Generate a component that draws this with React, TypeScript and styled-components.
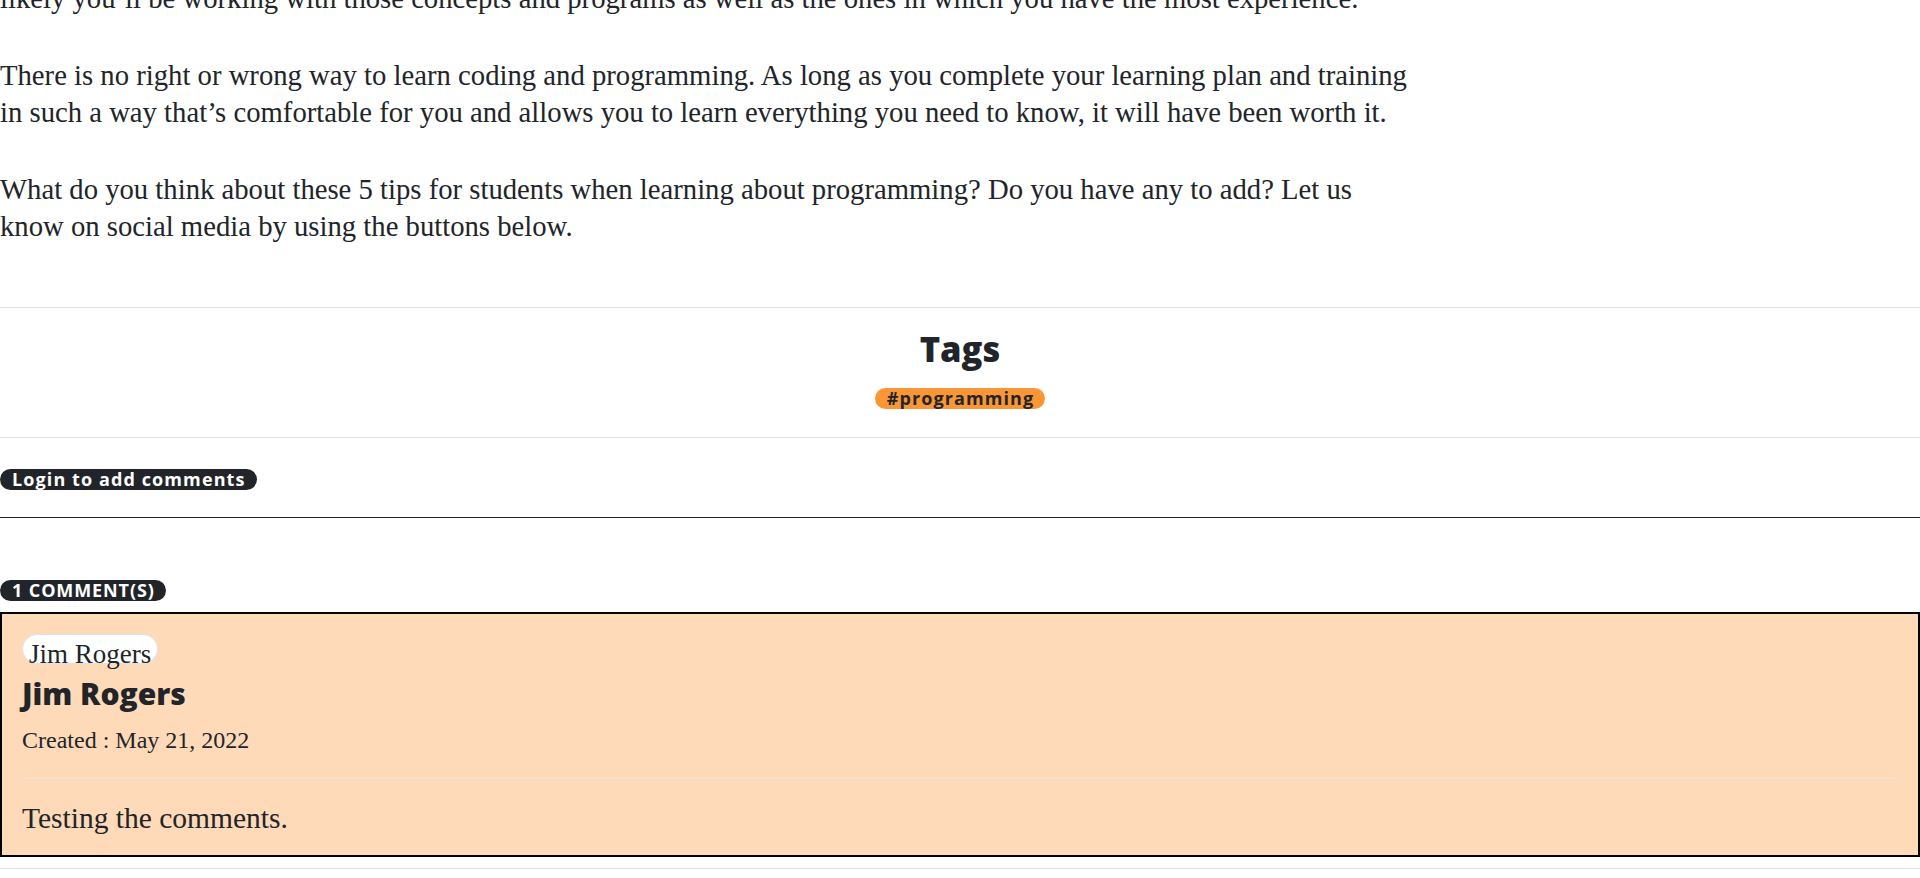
import React from "react";
import styled, { createGlobalStyle } from "styled-components";

const GlobalStyle = createGlobalStyle`
  html, body {
    margin: 0;
    padding: 0;
    background: #ffffff;
    overflow: hidden;
  }
  body {
    font-family: "Liberation Serif", "Times New Roman", serif;
    color: #212529;
  }
  * { box-sizing: border-box; }
`;

const Page = styled.main`
  display: flex;
  flex-direction: column;
  width: 100%;
`;

const Article = styled.article`
  max-width: 1418px;
  margin-top: -20px;
`;

const Paragraph = styled.p`
  margin: 0 0 40px;
  font-family: "Liberation Serif", "Times New Roman", serif;
  font-size: 28.7px;
  line-height: 37px;
  color: #212529;

  &:last-child {
    margin-bottom: 0;
  }
`;

const TagsSection = styled.section`
  margin-top: 62px;
  border-top: 1px solid #dee2e6;
  border-bottom: 1px solid #dee2e6;
  padding: 21px 0 28px;
  display: flex;
  flex-direction: column;
  align-items: center;
`;

const TagsTitle = styled.h2`
  margin: 0 0 19px;
  font-family: "Open Sans", "Liberation Sans", sans-serif;
  font-weight: 800;
  font-size: 34.5px;
  line-height: 40px;
  color: #212529;
`;

const Pill = styled.span<{ $tone: "dark" | "orange"; $upper?: boolean }>`
  display: inline-block;
  height: 21px;
  line-height: 21px;
  padding: 0 11px 0 12px;
  border-radius: 11px;
  font-family: "Open Sans", "Liberation Sans", sans-serif;
  font-weight: 700;
  font-size: 18px;
  letter-spacing: ${(p) => (p.$upper ? "0.9px" : "1.1px")};
  white-space: nowrap;
  text-transform: ${(p) => (p.$upper ? "uppercase" : "none")};
  background: ${(p) => (p.$tone === "orange" ? "#fb9637" : "#212529")};
  color: ${(p) => (p.$tone === "orange" ? "#212529" : "#ffffff")};
`;

const LoginSection = styled.div`
  padding: 31px 0 27px;
  border-bottom: 1px solid #212529;
  display: flex;
`;

const CommentsSection = styled.section`
  padding-top: 62px;
  display: flex;
  flex-direction: column;
  align-items: flex-start;
  gap: 11px;
`;

const CommentCard = styled.div`
  width: 100%;
  background: #ffdab9;
  border: 2px solid #000000;
  padding: 20px 18px 18px 20px;
  display: flex;
  flex-direction: column;
  align-items: flex-start;
`;

const AvatarAlt = styled.span`
  display: inline-block;
  height: 30px;
  padding: 9px 6px 0;
  line-height: 21px;
  border: 1px solid #dee2e6;
  border-radius: 15px;
  background: #ffffff;
  font-family: "Liberation Serif", "Times New Roman", serif;
  font-size: 27px;
  color: #212529;
`;

const AuthorName = styled.h3`
  margin: 12px 0 0;
  font-family: "Open Sans", "Liberation Sans", sans-serif;
  font-weight: 800;
  font-size: 30px;
  line-height: 36px;
  color: #212529;
`;

const Created = styled.div`
  margin-top: 10px;
  font-family: "Liberation Serif", "Times New Roman", serif;
  font-size: 24px;
  line-height: 36px;
  color: #212529;
`;

const Divider = styled.hr`
  width: 100%;
  margin: 20px 0 0;
  border: 0;
  border-top: 1px solid #ebe3dc;
`;

const CommentBody = styled.p`
  margin: 21px 0 0;
  font-family: "Liberation Serif", "Times New Roman", serif;
  font-size: 29.5px;
  line-height: 37px;
  color: #212529;
`;

const Footer = styled.footer`
  margin-top: 11px;
  border-top: 1px solid #dee2e6;
  height: 40px;
`;

export default function App() {
  return (
    <>
      <GlobalStyle />
      <Page>
        <Article>
          <Paragraph>
            likely you’ll be working with those concepts and programs as well as the ones in which you have the most experience.
          </Paragraph>
          <Paragraph>
            There is no right or wrong way to learn coding and programming. As long as you complete your learning plan and training in such a way that’s comfortable for you and allows you to learn everything you need to know, it will have been worth it.
          </Paragraph>
          <Paragraph>
            What do you think about these 5 tips for students when learning about programming? Do you have any to add? Let us know on social media by using the buttons below.
          </Paragraph>
        </Article>

        <TagsSection>
          <TagsTitle>Tags</TagsTitle>
          <Pill $tone="orange">#programming</Pill>
        </TagsSection>

        <LoginSection>
          <Pill $tone="dark">Login to add comments</Pill>
        </LoginSection>

        <CommentsSection>
          <Pill $tone="dark" $upper>1 comment(s)</Pill>
          <CommentCard>
            <AvatarAlt>Jim Rogers</AvatarAlt>
            <AuthorName>Jim Rogers</AuthorName>
            <Created>Created : May 21, 2022</Created>
            <Divider />
            <CommentBody>Testing the comments.</CommentBody>
          </CommentCard>
        </CommentsSection>

        <Footer />
      </Page>
    </>
  );
}
